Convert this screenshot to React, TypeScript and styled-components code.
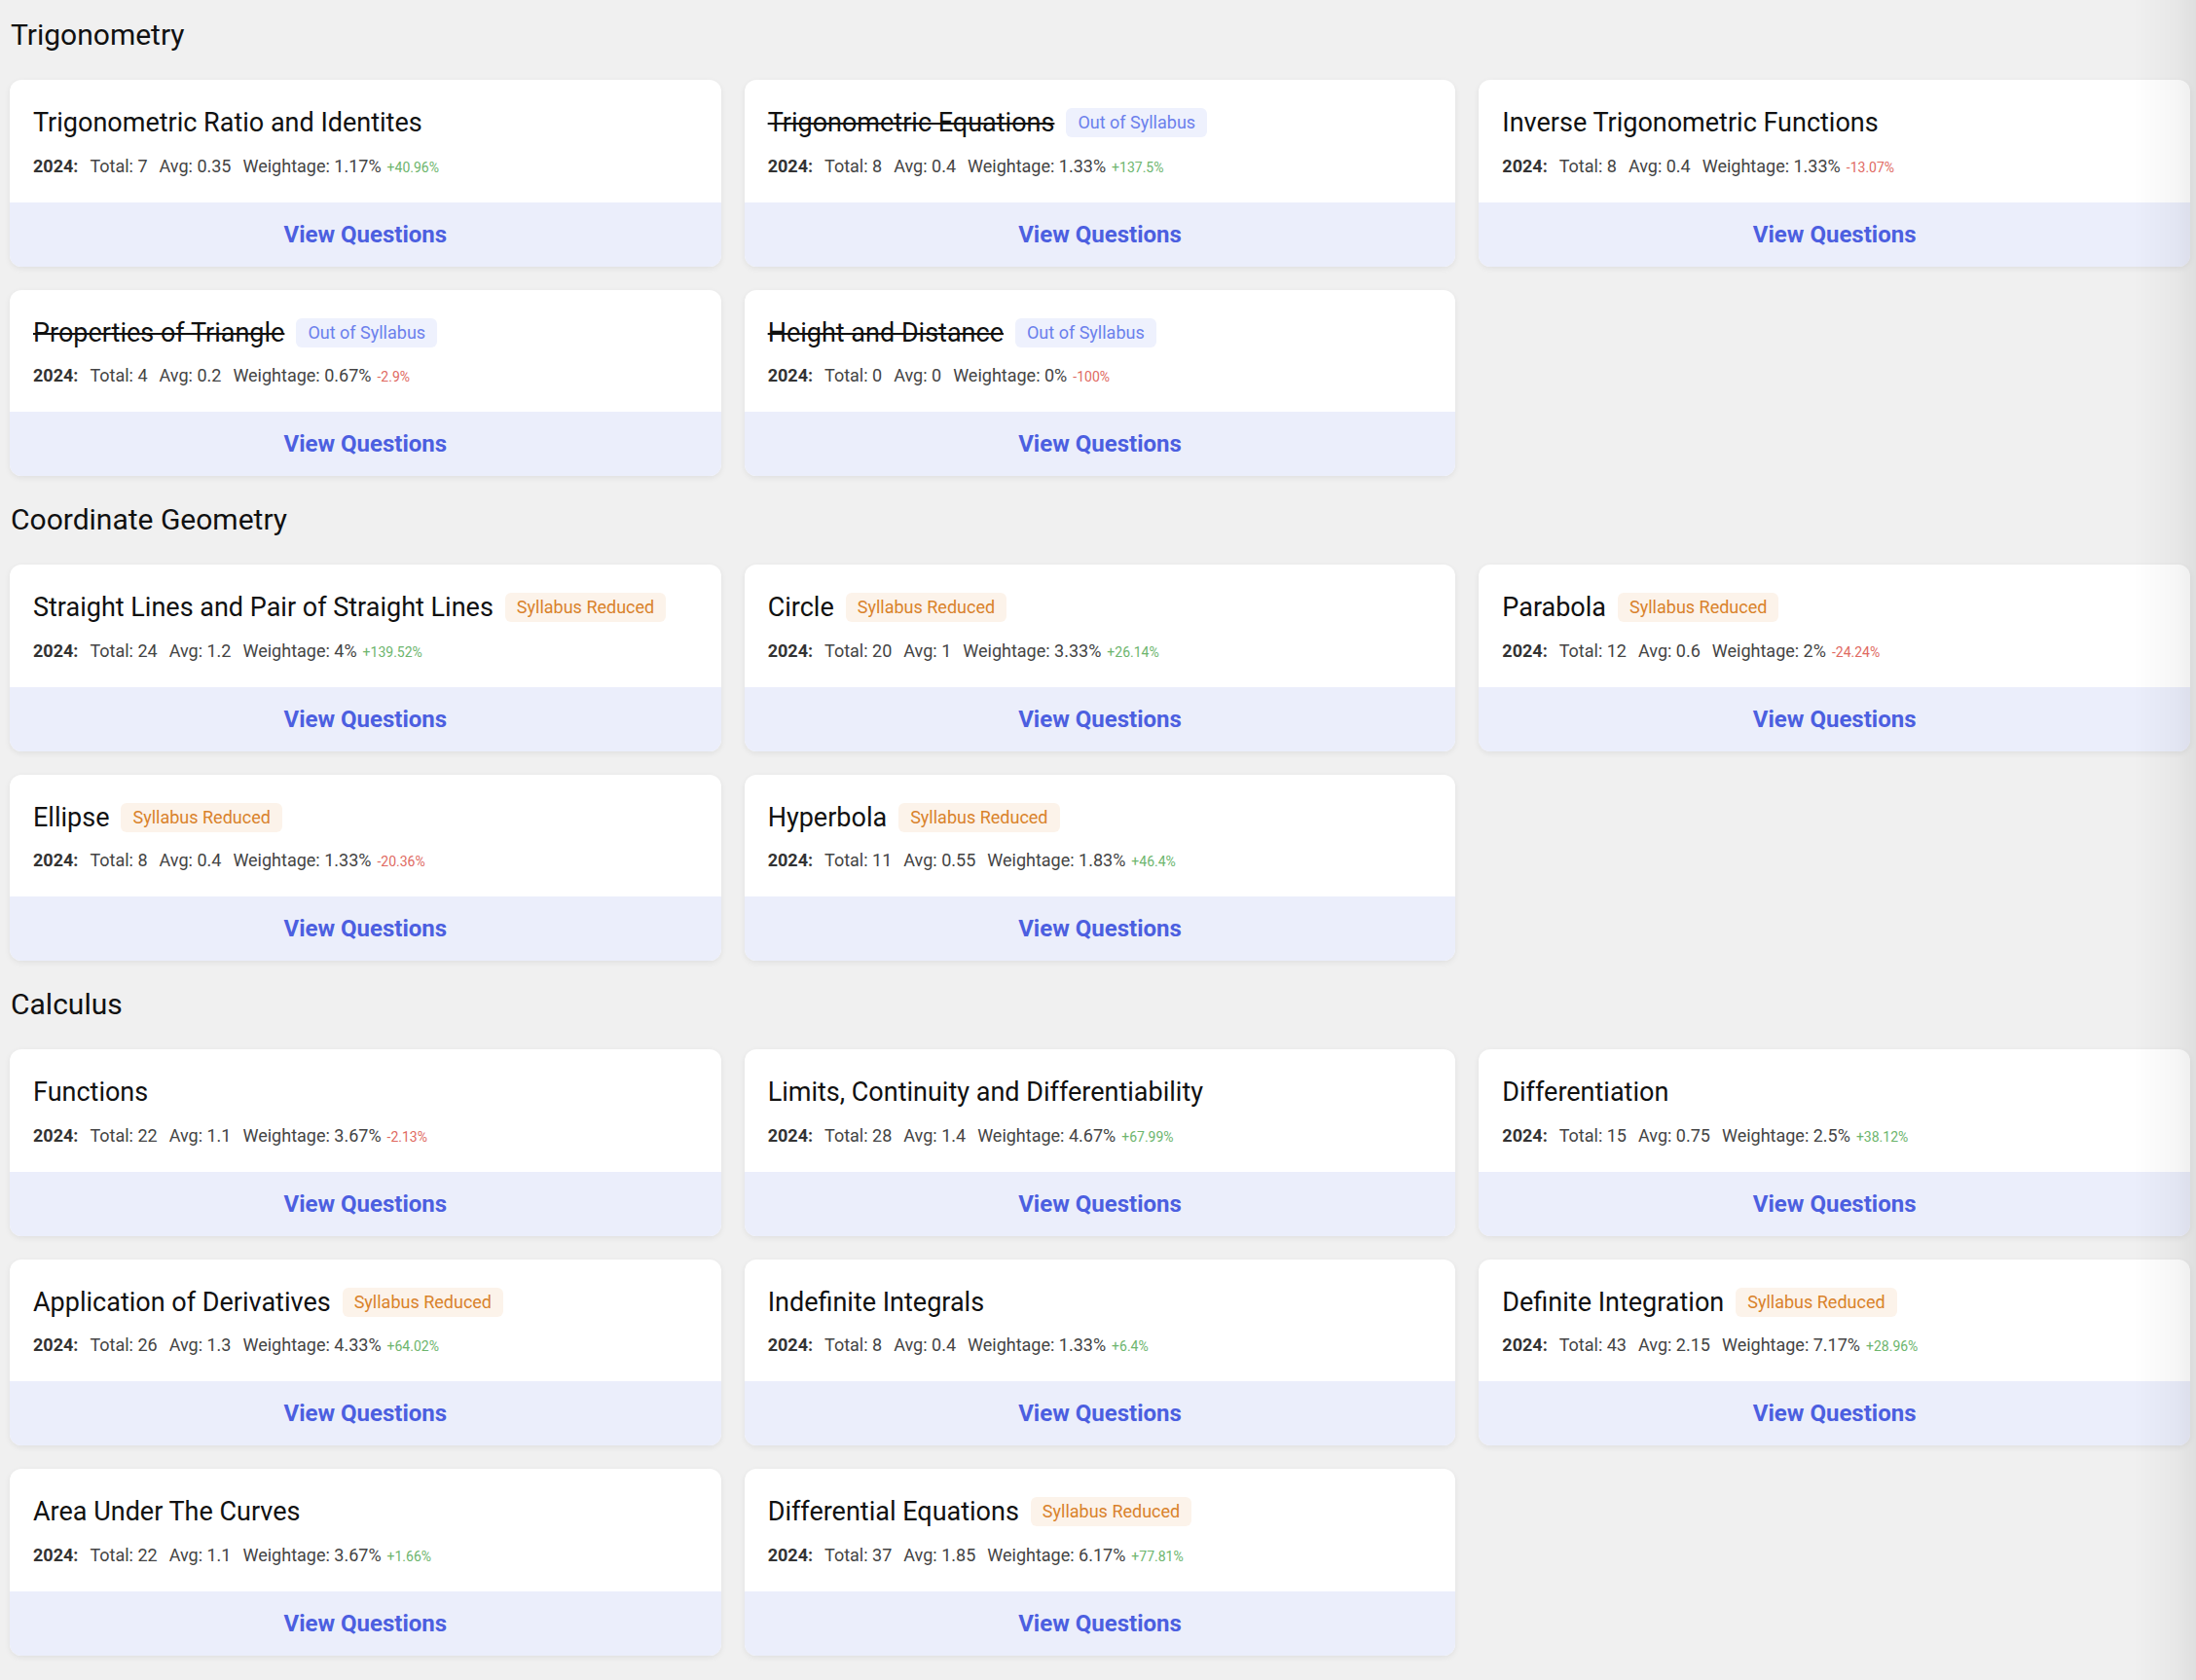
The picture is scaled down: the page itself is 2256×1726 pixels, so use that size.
import React from "react";
import styled, { createGlobalStyle } from "styled-components";

const GlobalStyle = createGlobalStyle`
  html, body {
    margin: 0;
    padding: 0;
    background: #f0f0f0;
    font-family: Roboto, "Liberation Sans", Arial, sans-serif;
    -webkit-font-smoothing: antialiased;
  }
  * { box-sizing: border-box; }
`;

type Flag = "none" | "out" | "reduced";

interface Topic {
  name: string;
  total: number;
  avg: string;
  weight: string;
  change: string;
  flag?: Flag;
}

interface Section {
  title: string;
  topics: Topic[];
}

const sections: Section[] = [
  {
    title: "Trigonometry",
    topics: [
      { name: "Trigonometric Ratio and Identites", total: 7, avg: "0.35", weight: "1.17%", change: "+40.96%" },
      { name: "Trigonometric Equations", total: 8, avg: "0.4", weight: "1.33%", change: "+137.5%", flag: "out" },
      { name: "Inverse Trigonometric Functions", total: 8, avg: "0.4", weight: "1.33%", change: "-13.07%" },
      { name: "Properties of Triangle", total: 4, avg: "0.2", weight: "0.67%", change: "-2.9%", flag: "out" },
      { name: "Height and Distance", total: 0, avg: "0", weight: "0%", change: "-100%", flag: "out" },
    ],
  },
  {
    title: "Coordinate Geometry",
    topics: [
      { name: "Straight Lines and Pair of Straight Lines", total: 24, avg: "1.2", weight: "4%", change: "+139.52%", flag: "reduced" },
      { name: "Circle", total: 20, avg: "1", weight: "3.33%", change: "+26.14%", flag: "reduced" },
      { name: "Parabola", total: 12, avg: "0.6", weight: "2%", change: "-24.24%", flag: "reduced" },
      { name: "Ellipse", total: 8, avg: "0.4", weight: "1.33%", change: "-20.36%", flag: "reduced" },
      { name: "Hyperbola", total: 11, avg: "0.55", weight: "1.83%", change: "+46.4%", flag: "reduced" },
    ],
  },
  {
    title: "Calculus",
    topics: [
      { name: "Functions", total: 22, avg: "1.1", weight: "3.67%", change: "-2.13%" },
      { name: "Limits, Continuity and Differentiability", total: 28, avg: "1.4", weight: "4.67%", change: "+67.99%" },
      { name: "Differentiation", total: 15, avg: "0.75", weight: "2.5%", change: "+38.12%" },
      { name: "Application of Derivatives", total: 26, avg: "1.3", weight: "4.33%", change: "+64.02%", flag: "reduced" },
      { name: "Indefinite Integrals", total: 8, avg: "0.4", weight: "1.33%", change: "+6.4%" },
      { name: "Definite Integration", total: 43, avg: "2.15", weight: "7.17%", change: "+28.96%", flag: "reduced" },
      { name: "Area Under The Curves", total: 22, avg: "1.1", weight: "3.67%", change: "+1.66%" },
      { name: "Differential Equations", total: 37, avg: "1.85", weight: "6.17%", change: "+77.81%", flag: "reduced" },
    ],
  },
];

const Page = styled.main`
  display: flex;
  flex-direction: column;
  gap: 20px;
  padding: 11px 6px 24px 10px;
`;

const SectionBlock = styled.section`
  display: flex;
  flex-direction: column;
`;

const SectionTitle = styled.h2`
  margin: 0 0 24px 1px;
  padding-top: 2px;
  font-size: 30px;
  line-height: 45px;
  font-weight: 400;
  color: #111111;
`;

const Grid = styled.div`
  display: grid;
  grid-template-columns: repeat(3, 1fr);
  gap: 24px;
`;

const Card = styled.article`
  display: flex;
  flex-direction: column;
  background: #ffffff;
  border-radius: 12px;
  overflow: hidden;
  box-shadow: 0 2px 6px rgba(0, 0, 0, 0.07);
`;

const CardBody = styled.div`
  display: flex;
  flex-direction: column;
  gap: 10.5px;
  padding: 24px;
`;

const TitleRow = styled.div`
  display: flex;
  align-items: center;
  gap: 12px;
  height: 40px;
`;

const TopicName = styled.h3<{ $struck: boolean }>`
  margin: 0;
  font-size: 27px;
  line-height: 40px;
  font-weight: 400;
  color: #111111;
  text-decoration: ${(p) => (p.$struck ? "line-through" : "none")};
  text-decoration-thickness: 2px;
`;

const Badge = styled.span<{ $kind: Flag }>`
  display: inline-block;
  padding: 4px 12px;
  border-radius: 6px;
  font-size: 18px;
  line-height: 22px;
  background: ${(p) => (p.$kind === "out" ? "#eef1fd" : "#fcf3ea")};
  color: ${(p) => (p.$kind === "out" ? "#6b80ec" : "#d9822b")};
`;

const Stats = styled.div`
  display: flex;
  align-items: baseline;
  gap: 12px;
  height: 27px;
  font-size: 18px;
  line-height: 27px;
  color: #444444;
`;

const Year = styled.span`
  font-weight: 700;
  color: #333333;
`;

const Change = styled.span<{ $up: boolean }>`
  margin-left: 6px;
  font-size: 14px;
  line-height: 1;
  color: ${(p) => (p.$up ? "#6db56d" : "#e06a62")};
`;

const ViewButton = styled.button`
  display: block;
  width: 100%;
  border: none;
  margin: 0;
  padding: 15px 0;
  background: #ebeefb;
  font-family: inherit;
  font-size: 24px;
  line-height: 36px;
  font-weight: 700;
  color: #4c5fe0;
  text-align: center;
  cursor: pointer;
`;

const EdgeFade = styled.div`
  position: fixed;
  top: 0;
  right: 0;
  bottom: 0;
  width: 64px;
  pointer-events: none;
  background: linear-gradient(to right, rgba(0, 0, 0, 0) 0%, rgba(0, 0, 0, 0.035) 70%, rgba(0, 0, 0, 0.07) 100%);
`;

function TopicCard({ t }: { t: Topic }) {
  const flag = t.flag ?? "none";
  return (
    <Card>
      <CardBody>
        <TitleRow>
          <TopicName $struck={flag === "out"}>{t.name}</TopicName>
          {flag !== "none" && (
            <Badge $kind={flag}>{flag === "out" ? "Out of Syllabus" : "Syllabus Reduced"}</Badge>
          )}
        </TitleRow>
        <Stats>
          <Year>2024:</Year>
          <span>Total: {t.total}</span>
          <span>Avg: {t.avg}</span>
          <span>
            Weightage: {t.weight}
            <Change $up={t.change.startsWith("+")}>{t.change}</Change>
          </span>
        </Stats>
      </CardBody>
      <ViewButton>View Questions</ViewButton>
    </Card>
  );
}

export default function App() {
  return (
    <>
      <GlobalStyle />
      <Page>
        {sections.map((s) => (
          <SectionBlock key={s.title}>
            <SectionTitle>{s.title}</SectionTitle>
            <Grid>
              {s.topics.map((t) => (
                <TopicCard key={t.name} t={t} />
              ))}
            </Grid>
          </SectionBlock>
        ))}
      </Page>
      <EdgeFade />
    </>
  );
}
